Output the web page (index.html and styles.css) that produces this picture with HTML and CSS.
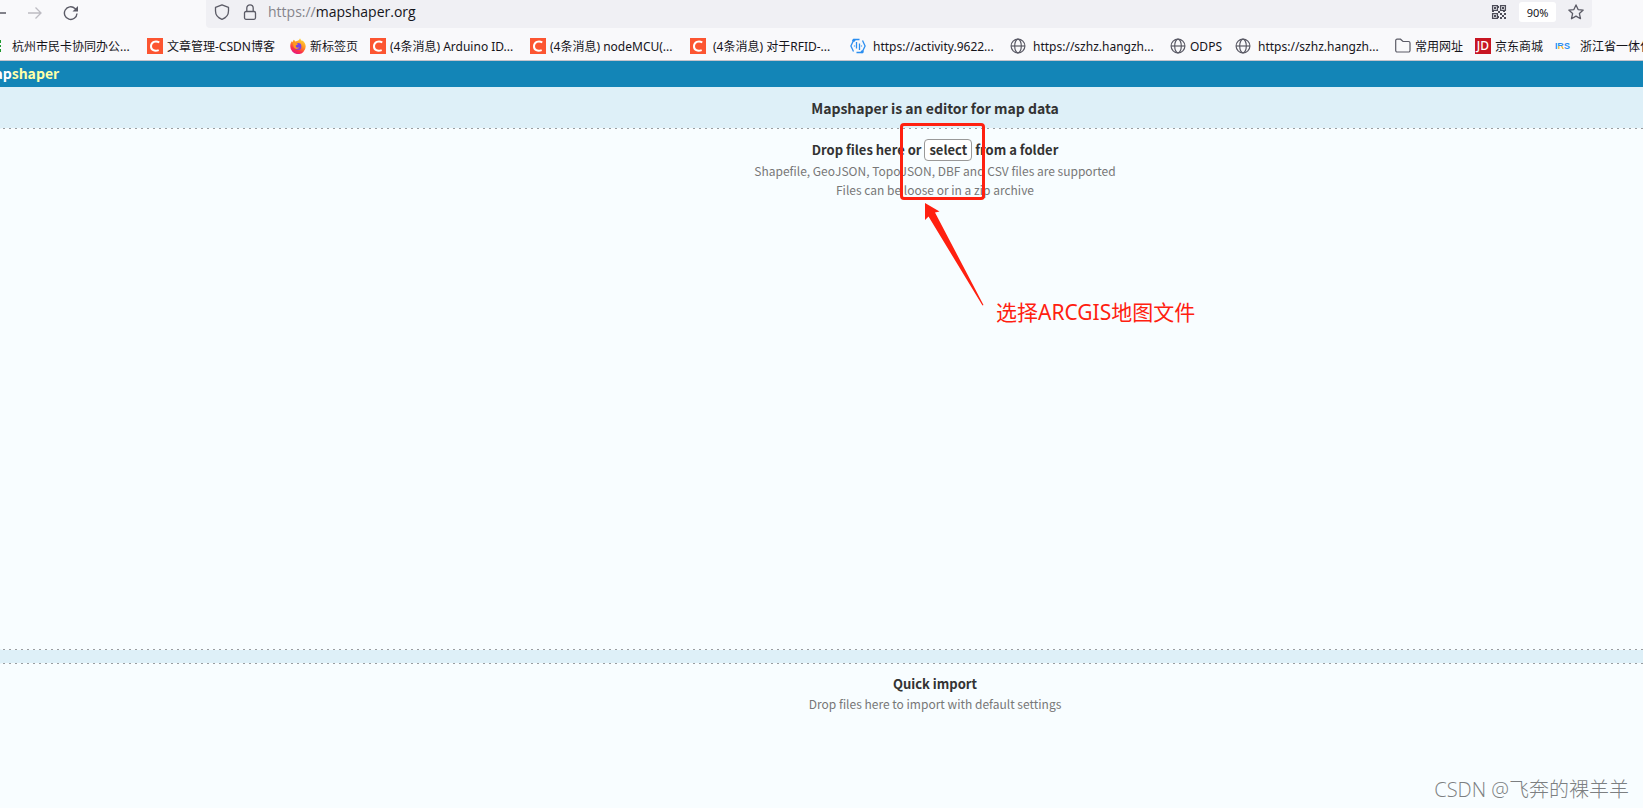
FILE: index.html
```html
<!DOCTYPE html>
<html lang="zh-CN">
<head>
<meta charset="utf-8">
<title>mapshaper</title>
<link rel="stylesheet" href="styles.css">
</head>
<body>
<svg class="defs" aria-hidden="true">
  <symbol id="globe" viewBox="0 0 16 16"><g fill="none" stroke="#5b5b66" stroke-width="1.2"><circle cx="8" cy="8" r="6.9"/><ellipse cx="8" cy="8" rx="3.3" ry="6.9"/><path d="M1 8h14"/></g></symbol>
  <symbol id="csdn" viewBox="0 0 16 16"><path fill="#fc5531" d="M0 0h16v16H0z"/><path d="M12.3 4.3C8.4 2.3 4.3 3.9 4 8c-.2 4.2 3.700 5.600 7.700 4.100" fill="none" stroke="#fff" stroke-width="2"/></symbol>
</svg>

<header class="browser">
  <div class="toolbar">
    <div class="nav">
      <button class="tool" aria-label="Back"><svg width="16" height="16" viewBox="0 0 16 16"><path d="M15 8H2M7 3L2 8l5 5" fill="none" stroke="#5b5b66" stroke-width="1.300"/></svg></button>
      <button class="tool" aria-label="Forward" disabled><svg width="16" height="16" viewBox="0 0 16 16"><path d="M1 8h13M8.500 2.500L14 8l-5.500 5.500" fill="none" stroke="#bdbcc2" stroke-width="1.300"/></svg></button>
      <button class="tool" aria-label="Reload"><svg width="16" height="16" viewBox="0 0 16 16"><path d="M14 8.500A6.300 6.300 0 1 1 12 3.500L13.500 5" fill="none" stroke="#5b5b66" stroke-width="1.400"/><path d="M15 1v5.500H9.500z" fill="#5b5b66"/></svg></button>
    </div>
    <div class="urlbar">
      <svg width="16" height="16" viewBox="0 0 16 16"><path d="M8 .8L14.500 3.300V7c0 4-2.500 6.800-6.500 8.300C4 13.800 1.500 11 1.500 7V3.300z" fill="none" stroke="#5b5b66" stroke-width="1.300" stroke-linejoin="round"/></svg>
      <svg class="lock" width="16" height="16" viewBox="0 0 16 16"><g fill="none" stroke="#5b5b66" stroke-width="1.300"><rect x="2.500" y="7.500" width="11" height="7.800" rx="1.500"/><path d="M4.800 7.500V4a3.200 3.200 0 0 1 6.400 0v3.500"/></g></svg>
      <a class="url" href="#"><span class="scheme">https://</span>mapshaper.org</a>
      <button class="tool" aria-label="QR code"><svg width="16" height="16" viewBox="0 0 16 16"><g fill="none" stroke="#4d4d58" stroke-width="1.300"><path d="M1.600 1.600h4.800v4.800H1.600zM9.600 1.600h4.800v4.800H9.600zM1.600 9.600h4.800v4.800H1.600z"/></g><path fill="#4d4d58" d="M3 3h2v2H3zM11 3h2v2h-2zM3 11h2v2H3zM9 9h2v2H9zM13 9h2v2h-2zM11 11h2v2h-2zM9 13h2v2H9zM13 13h2v2h-2zM7 7h2v2H7zM7 2h1v2H7zM7 12h1v2H7zM1 7h2v1H1zM12 7h2v1h-2z"/></svg></button>
      <button class="zoom">90%</button>
      <button class="tool" aria-label="Bookmark"><svg width="16" height="16" viewBox="0 0 16 16"><path d="M8 .9l2.100 4.700 5.100.5-3.800 3.500 1.100 5.100L8 12.100l-4.500 2.600 1.100-5.100L.8 6.100l5.100-.5z" fill="none" stroke="#5b5b66" stroke-width="1.300" stroke-linejoin="round"/></svg></button>
    </div>
  </div>

  <nav class="bookmarks">
    <a class="mark wide roomy" href="#"><svg width="16" height="16" viewBox="0 0 16 16"><path fill="#1f9a2f" d="M3 2h11v3H3zM3 7h11v2H3zM3 11h11v3H3z"/></svg>杭州市民卡协同办公...</a>
    <a class="mark medium" href="#"><svg width="16" height="16"><use href="#csdn"/></svg>文章管理-CSDN博客</a>
    <a class="mark short" href="#"><svg width="16" height="16" viewBox="0 0 16 16"><defs><linearGradient id="flame" x1=".8" y1="0" x2=".3" y2="1"><stop offset="0" stop-color="#ffe13d"/><stop offset=".45" stop-color="#ff9021"/><stop offset=".75" stop-color="#fb3048"/><stop offset="1" stop-color="#e31587"/></linearGradient></defs><path fill="url(#flame)" d="M10 .3c.5 1.200 1 1.900 2 2.700l.5-.5c2 1.500 3.200 3.700 3.200 6A7.700 7.700 0 0 1 .3 8.300C.2 6 .9 4.200 2 3l.3 1.300C3 3.400 3.300 3 3.500 1.800 4.500 2.300 5 3 5.300 3.500 7.500 3.200 9.500 2 10 .3z"/><circle cx="8" cy="8.400" r="3.400" fill="#7542e5"/><path fill="#ff9a1f" d="M3 5.200c2-.8 3.500-.2 5 .7-.3 1-2 .8-2.300 1.800-.2 1.700 2 2.500 3.700 1.500-1 2.500-5.300 2.300-5.900-.7z"/></svg>新标签页</a>
    <a class="mark wide" href="#"><svg width="16" height="16"><use href="#csdn"/></svg>(4条消息) Arduino ID...</a>
    <a class="mark wide" href="#"><svg width="16" height="16"><use href="#csdn"/></svg>(4条消息) nodeMCU(...</a>
    <a class="mark wide spaced" href="#"><svg width="16" height="16"><use href="#csdn"/></svg>(4条消息) 对于RFID-...</a>
    <a class="mark wide spaced" href="#"><svg width="16" height="16" viewBox="0 0 16 16"><g fill="none" stroke="#2b8ef0" stroke-width="1.300"><path d="M9.500 1.500H4L.9 8l2.600 5.500M6.500 14.500H12L15.100 8l-2.600-5.500M6.500 4v6.500M9.500 5.500V12M4.500 7.500v1M11.500 7.500v1"/></g><circle cx="3.800" cy="2.300" r="1.500" fill="#2b8ef0"/><circle cx="12.200" cy="13.700" r="1.500" fill="#2b8ef0"/></svg>https://activity.9622...</a>
    <a class="mark wide spaced" href="#"><svg width="16" height="16"><use href="#globe"/></svg>https://szhz.hangzh...</a>
    <a class="mark tiny" href="#"><svg width="16" height="16"><use href="#globe"/></svg>ODPS</a>
    <a class="mark wide spaced" href="#"><svg width="16" height="16"><use href="#globe"/></svg>https://szhz.hangzh...</a>
    <a class="mark short" href="#"><svg width="16" height="16" viewBox="0 0 16 16"><path d="M.7 12.500v-10a1.300 1.300 0 0 1 1.300-1.300h3.500L8 3.500h5.500A1.500 1.500 0 0 1 15 5v7.500a1.500 1.500 0 0 1-1.500 1.500H2.200A1.500 1.500 0 0 1 .7 12.500z" fill="none" stroke="#5b5b66" stroke-width="1.200"/></svg>常用网址</a>
    <a class="mark short" href="#"><span class="jd">JD</span>京东商城</a>
    <a class="mark wide roomy" href="#"><span class="irs">I<b>R</b>S</span>浙江省一体化</a>
  </nav>
</header>

<div class="page">
  <div class="brand">map<span>shaper</span></div>
  <main class="stage">
    <h1 class="title">Mapshaper is an editor for map data</h1>
    <section class="drop">
      <h2 class="title">Drop files here or <button class="select">select</button> from a folder</h2>
      <p>Shapefile, GeoJSON, TopoJSON, DBF and CSV files are supported</p>
      <p>Files can be loose or in a zip archive</p>
      <div class="frame"></div>
      <svg class="arrow" width="62" height="106" viewBox="0 0 62 106"><path fill="#ff2010" d="M1 1L15.500 9.500 11 10.500 59.500 103 58.500 103.500 4.500 14.500 1 18z"/></svg>
      <div class="note">选择ARCGIS地图文件</div>
    </section>
    <section class="drop quick">
      <h2 class="title">Quick import</h2>
      <p>Drop files here to import with default settings</p>
    </section>
  </main>
  <div class="watermark">CSDN @飞奔的裸羊羊</div>
</div>
</body>
</html>
```
FILE: styles.css
```css
* { box-sizing: border-box; }
body {
  margin: 0;
  min-height: 100vh;
  display: flex;
  flex-direction: column;
  overflow: hidden;
  font-family: "Noto Sans", "Noto Sans CJK SC", sans-serif;
  color: #15141a;
}
.defs { position: absolute; width: 0; height: 0; }
button { border: 0; padding: 0; background: none; font: inherit; color: inherit; }
a { color: inherit; text-decoration: none; }
svg { flex: none; display: block; }

.browser { background: #f9f9fb; border-bottom: 1px solid #c3c4cc; overflow: hidden; }
.toolbar { display: flex; height: 28px; padding-right: 51px; }
.nav { display: flex; align-items: center; gap: 20px; width: 206px; padding-bottom: 3px; margin-left: -9px; margin-right: 9px; }
.urlbar {
  flex: 1;
  display: flex;
  align-items: center;
  background: #f0f0f4;
  border-radius: 0 0 4px 4px;
  padding: 0 8px 4px;
}
.lock { margin-left: 12px; }
.url { flex: 1; margin-left: 10px; font-family: "Open Sans", sans-serif; font-size: 14px; line-height: 20px; }
.scheme { color: #85848b; }
.zoom { width: 37px; height: 20px; margin: 0 12px; background: #fff; border-radius: 3px; font-size: 11px; }

.bookmarks { display: flex; height: 32px; margin-left: -13px; align-items: center; padding-top: 6px; }
.mark { flex: none; display: flex; align-items: center; gap: 4px; font-size: 12px; line-height: 18px; white-space: nowrap; }
.mark svg, .mark span { margin-bottom: 2px; }
.spaced { gap: 7px; }
.roomy { gap: 9px; }
.wide { width: 160px; }
.medium { width: 143px; }
.short { width: 80px; }
.tiny { width: 65px; }
.jd { width: 16px; height: 16px; background: #c81623; color: #fff; text-align: center; line-height: 16px; font-weight: 500; }
.irs { width: 16px; font-family: "Liberation Sans", sans-serif; font-size: 9px; font-weight: 700; color: #2b8ef0; }
.irs b { color: #2b8ef0; background: linear-gradient(#2b8ef0 50%, #f0b429 50%); background-clip: text; -webkit-text-fill-color: transparent; }

.page {
  flex: 1;
  display: flex;
  flex-direction: column;
  position: relative;
  overflow: hidden;
  background: #def0f8;
  font-family: "Noto Sans CJK SC", sans-serif;
}
.brand {
  height: 26px;
  margin-left: -19px;
  background: #1385b7;
  color: #fff;
  font-size: 14px;
  line-height: 25px;
  font-weight: 700;
}
.brand span { color: #ffffa8; }
.stage {
  flex: 1;
  display: flex;
  flex-direction: column;
  margin: 0 -230px 0 -3px;
  text-align: center;
  color: #333;
}
.title { margin: 0; font-size: 14px; line-height: 20px; font-weight: 700; }
h1.title { padding: 11px 0 10px; }
h2.title { font-size: 13px; }
.drop {
  flex: 1;
  position: relative;
  padding-top: 11px;
  background:
    repeating-linear-gradient(90deg, #9a9da0 0 2px, transparent 2px 6px) top / 100% 1px no-repeat,
    repeating-linear-gradient(90deg, #9a9da0 0 2px, transparent 2px 6px) bottom / 100% 1px no-repeat,
    #f8fdff;
  border-radius: 6px;
}
.quick { flex: none; min-height: 160px; margin: 13px 0 -15px; }
.drop p { margin: 0; font-size: 12px; line-height: 19px; color: #777; }
.select { height: 22px; padding: 0 4px; border: 1px solid #999; border-radius: 4px; background: #fff; line-height: 20px; }
.frame {
  position: absolute;
  left: calc(50% - 35px);
  top: -5px;
  width: 85px;
  height: 77px;
  border: 3px solid #ff2010;
  border-radius: 4px;
}
.arrow { position: absolute; left: calc(50% - 11px); top: 74px; }
.note {
  position: absolute;
  left: calc(50% + 61px);
  top: 170px;
  font-family: "Noto Sans", "Noto Sans CJK SC", sans-serif;
  font-size: 21px;
  line-height: 28px;
  color: #ff2010;
}
.watermark {
  position: absolute;
  right: 14px;
  bottom: 4px;
  font-size: 20px;
  line-height: 28px;
  font-family: "Open Sans", "Noto Sans CJK SC", sans-serif;
  font-weight: 300;
  color: #7c7f81;
}
```
